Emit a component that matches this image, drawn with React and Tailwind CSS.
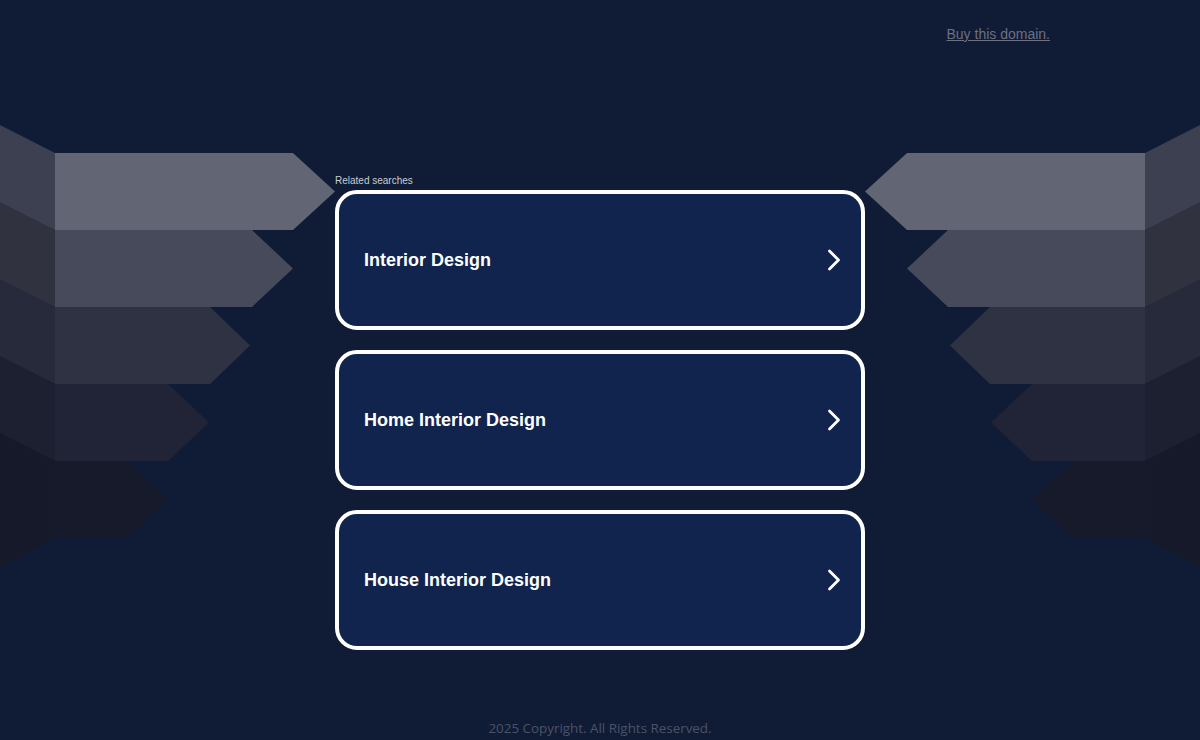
import React from 'react';

/* ── search terms shown as cards ── */
const TERMS = ['Interior Design', 'Home Interior Design', 'House Interior Design'];

/* ── stacked arrow shapes, left side (right side is mirrored) ── */
const SHAPES = [
  { front: '#626574', side: '#3d4051', right: 293, tip: 335 },
  { front: '#474a5a', side: '#30333f', right: 252, tip: 293 },
  { front: '#2f3243', side: '#272a3a', right: 210, tip: 250 },
  { front: '#212436', side: '#1d2030', right: 168, tip: 209 },
  { front: '#161a2b', side: '#151929', right: 127, tip: 168 },
];

const Arrows = ({ className }) => (
  <svg className={className} width="340" height="600" viewBox="0 0 340 600" fill="none">
    {SHAPES.map((s, i) => {
      const t = 153 + 77 * i;
      const b = t + 77;
      const m = t + 38.5;
      return (
        <g key={i}>
          <polygon points={`0,${t - 28} 55,${t} 55,${b} 0,${b + (i === 4 ? 30 : -25)}`} fill={s.side} />
          <polygon points={`55,${t} ${s.right},${t} ${s.tip},${m} ${s.right},${b} 55,${b}`} fill={s.front} />
        </g>
      );
    })}
  </svg>
);

const Chevron = () => (
  <svg width="14" height="22" viewBox="0 0 14 22" fill="none">
    <path d="M2.5 2L11.5 11L2.5 20" stroke="white" strokeWidth="2.8" strokeLinecap="round" strokeLinejoin="round" />
  </svg>
);

const App = () => {
  return (
    <div className="relative h-[740px] w-full overflow-hidden bg-[#101c36] font-['Liberation_Sans',Arial,sans-serif]">
      {/* ── background decoration ── */}
      <Arrows className="absolute left-0 top-0 pointer-events-none" />
      <Arrows className="absolute right-0 top-0 pointer-events-none -scale-x-100" />

      <div className="relative z-10 flex h-full flex-col">
        {/* ── header ── */}
        <header className="flex justify-end pr-[150px] pt-[26px]">
          <a href="#" className="text-[14px] leading-4 text-[#6b7083] underline">
            Buy this domain.
          </a>
        </header>

        {/* ── related searches ── */}
        <main className="mx-auto mt-[133px] w-[530px]">
          <p className="text-[10px] leading-[12px] text-[#c9ccd4]">Related searches</p>
          <div className="mt-[3px] flex flex-col gap-5">
            {TERMS.map((term) => (
              <a
                key={term}
                href="#"
                className="flex h-[140px] items-center justify-between rounded-[22px] border-4 border-white bg-[#10244d] pl-[25px] pr-[20px]"
              >
                <span className="text-[18px] font-bold text-white">{term}</span>
                <Chevron />
              </a>
            ))}
          </div>
        </main>

        {/* ── footer ── */}
        <footer className="mt-auto pb-[3px] text-center font-['Open_Sans',sans-serif] text-[13.4px] leading-[18px] text-[#4b5267]">
          2025 Copyright. All Rights Reserved.
        </footer>
      </div>
    </div>
  );
};

export default App;
